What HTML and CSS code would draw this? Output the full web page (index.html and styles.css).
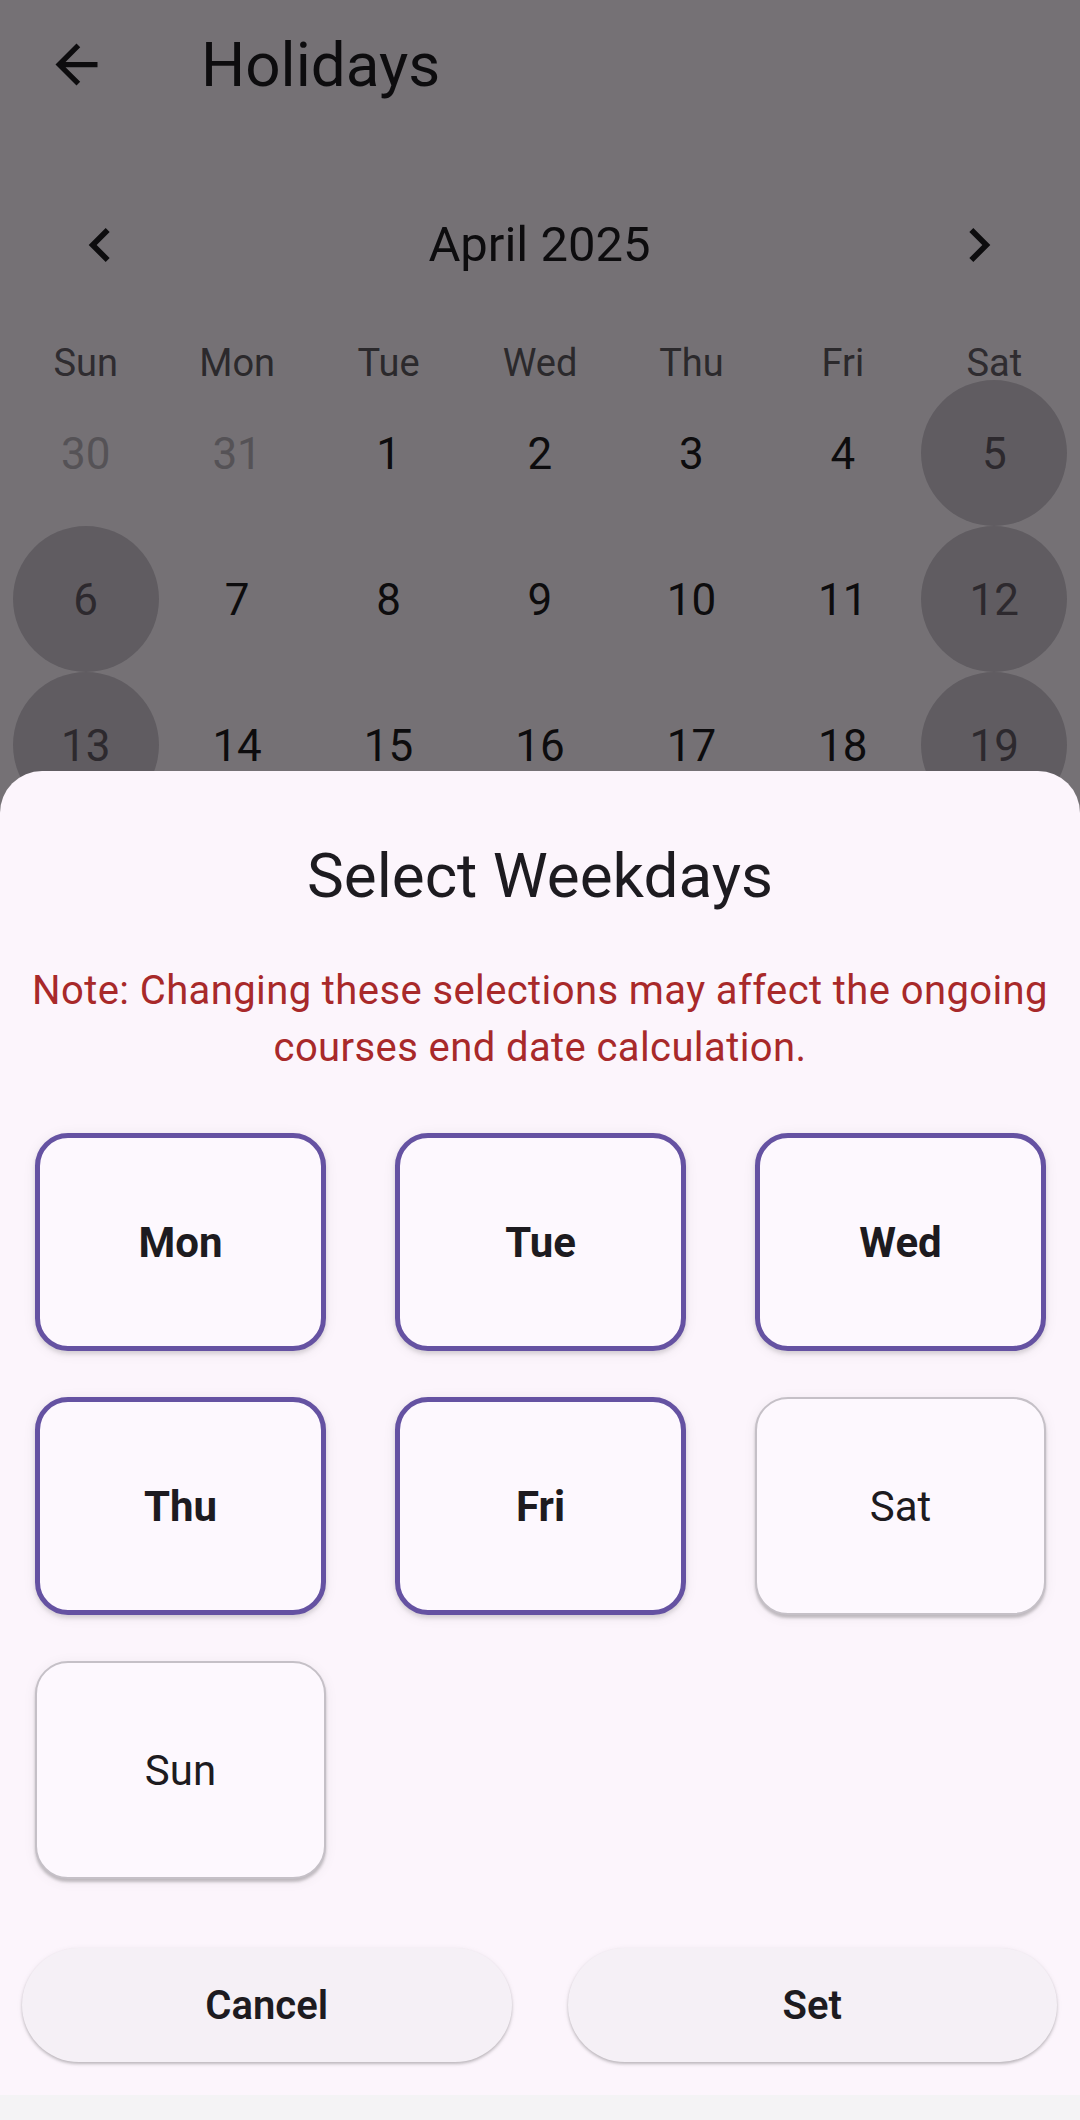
FILE: index.html
```html
<!DOCTYPE html>
<html lang="en">
<head>
<meta charset="utf-8">
<title>Holidays</title>
<link rel="stylesheet" href="styles.css">
</head>
<body>
<div class="page">
  <header class="appbar">
    <svg class="back" viewBox="0 0 24 24" aria-hidden="true"><path d="M20 11H7.83l5.59-5.59L12 4l-8 8 8 8 1.41-1.41L7.83 13H20v-2z"/></svg>
    <h1 class="title">Holidays</h1>
  </header>

  <section class="calendar">
    <div class="cal-head">
      <svg class="chev prev" viewBox="0 0 24 24" aria-hidden="true"><path d="M15.41 7.41L14 6l-6 6 6 6 1.41-1.41L10.83 12z"/></svg>
      <div class="month">April 2025</div>
      <svg class="chev next" viewBox="0 0 24 24" aria-hidden="true"><path d="M10 6L8.59 7.41 13.17 12l-4.58 4.59L10 18l6-6z"/></svg>
    </div>
    <div class="dow">
      <span class="we">Sun</span><span>Mon</span><span>Tue</span><span>Wed</span><span>Thu</span><span>Fri</span><span class="we">Sat</span>
    </div>
    <div class="days">
      <div class="day out"><span>30</span></div>
      <div class="day out"><span>31</span></div>
      <div class="day"><span>1</span></div>
      <div class="day"><span>2</span></div>
      <div class="day"><span>3</span></div>
      <div class="day"><span>4</span></div>
      <div class="day hol"><span>5</span></div>

      <div class="day hol"><span>6</span></div>
      <div class="day"><span>7</span></div>
      <div class="day"><span>8</span></div>
      <div class="day"><span>9</span></div>
      <div class="day"><span>10</span></div>
      <div class="day"><span>11</span></div>
      <div class="day hol"><span>12</span></div>

      <div class="day hol"><span>13</span></div>
      <div class="day"><span>14</span></div>
      <div class="day"><span>15</span></div>
      <div class="day"><span>16</span></div>
      <div class="day"><span>17</span></div>
      <div class="day"><span>18</span></div>
      <div class="day hol"><span>19</span></div>
    </div>
  </section>
</div>

<div class="scrim"></div>

<div class="sheet">
  <h2 class="sheet-title">Select Weekdays</h2>
  <p class="note">Note: Changing these selections may affect the ongoing courses end date calculation.</p>
  <div class="grid">
    <div class="wd sel">Mon</div>
    <div class="wd sel">Tue</div>
    <div class="wd sel">Wed</div>
    <div class="wd sel">Thu</div>
    <div class="wd sel">Fri</div>
    <div class="wd">Sat</div>
    <div class="wd">Sun</div>
  </div>
  <div class="actions">
    <button class="btn">Cancel</button>
    <button class="btn">Set</button>
  </div>
</div>

<div class="navbar"></div>
</body>
</html>
```

FILE: styles.css
```css
* { box-sizing: border-box; }

html, body {
  margin: 0;
  padding: 0;
  width: 1080px;
  height: 2120px;
  overflow: hidden;
  background: #fef7ff;
  font-family: Roboto, "Noto Sans", "Liberation Sans", sans-serif;
  color: #1d1b20;
}

.page {
  width: 1080px;
  height: 2120px;
  background: #fef7ff;
}

/* App bar */
.appbar {
  height: 128px;
  display: flex;
  align-items: center;
}

.back {
  width: 63px;
  height: 63px;
  margin-left: 45px;
  fill: #1d1b20;
  flex: none;
}

.title {
  margin: 0 0 0 93px;
  font-size: 62px;
  font-weight: 400;
  line-height: 73px;
  color: #1d1b20;
}

/* Calendar */
.calendar {
  padding: 72px 10px 0;
}

.cal-head {
  height: 90px;
  display: grid;
  grid-template-columns: 1fr auto 1fr;
  align-items: center;
  padding: 0 57px 0 56px;
}

.chev {
  width: 68px;
  height: 68px;
  fill: #1d1b20;
}

.chev.next { justify-self: end; }

.month {
  font-size: 49px;
  line-height: 56px;
  color: #1d1b20;
}

.dow {
  margin-top: 54px;
  height: 36px;
  display: grid;
  grid-template-columns: repeat(7, 1fr);
  font-size: 38px;
  line-height: 38px;
  text-align: center;
  color: #5f5a60;
}

.dow .we { color: #66606a; }

.days {
  display: grid;
  grid-template-columns: repeat(7, 1fr);
  grid-auto-rows: 146px;
}

.day {
  display: flex;
  align-items: center;
  justify-content: center;
  font-size: 44px;
  color: #1d1b20;
}

.day span {
  width: 146px;
  height: 146px;
  border-radius: 50%;
  display: flex;
  align-items: center;
  justify-content: center;
  line-height: 52px;
  padding-top: 1px;
}

.day.out { color: #b9b3bc; }

.day.hol span {
  background: #d1c8d3;
  color: #625b64;
}

/* Scrim */
.scrim {
  position: fixed;
  inset: 0;
  background: rgba(0, 0, 0, 0.54);
}

/* Bottom sheet */
.sheet {
  position: fixed;
  left: 0;
  right: 0;
  top: 771px;
  bottom: 25px;
  background: #fcf5fc;
  border-radius: 42px 42px 0 0;
  padding-top: 69px;
  display: flex;
  flex-direction: column;
}

.sheet-title {
  margin: 0;
  text-align: center;
  font-size: 62px;
  font-weight: 400;
  line-height: 72px;
  color: #1d1b20;
}

.note {
  margin: 50px 18px 0;
  text-align: center;
  font-size: 40px;
  line-height: 57px;
  letter-spacing: 0.4px;
  color: #a8292a;
}

.grid {
  margin-top: 57px;
  padding: 0 34px 0 35px;
  display: grid;
  grid-template-columns: repeat(3, 291px);
  grid-auto-rows: 218px;
  column-gap: 69px;
  row-gap: 46px;
}

.wd {
  display: flex;
  align-items: center;
  justify-content: center;
  background: #fdf8fe;
  border: 2px solid #c5c0c7;
  border-radius: 33px;
  font-size: 42px;
  color: #1d1b20;
  box-shadow: 0 3px 3px rgba(0, 0, 0, 0.22), 0 2px 14px rgba(0, 0, 0, 0.06);
}

.wd.sel {
  border: 5px solid #6552a2;
  font-weight: 700;
  box-shadow: 0 3px 4px rgba(0, 0, 0, 0.12), 0 2px 14px rgba(0, 0, 0, 0.07);
}

.actions {
  margin-top: 69px;
  padding: 0 23px 0 22px;
  display: flex;
  gap: 56px;
}

.btn {
  flex: 1;
  height: 114px;
  border: none;
  border-radius: 57px;
  background: #f5f0f6;
  font-family: Roboto, "Noto Sans", "Liberation Sans", sans-serif;
  font-size: 40px;
  font-weight: 600;
  color: #1d1b20;
  box-shadow: 0 2px 3px rgba(0, 0, 0, 0.22), 0 1px 6px rgba(0, 0, 0, 0.06);
}

.navbar {
  position: fixed;
  left: 0;
  right: 0;
  bottom: 0;
  height: 25px;
  background: #f4f3f5;
}
```
